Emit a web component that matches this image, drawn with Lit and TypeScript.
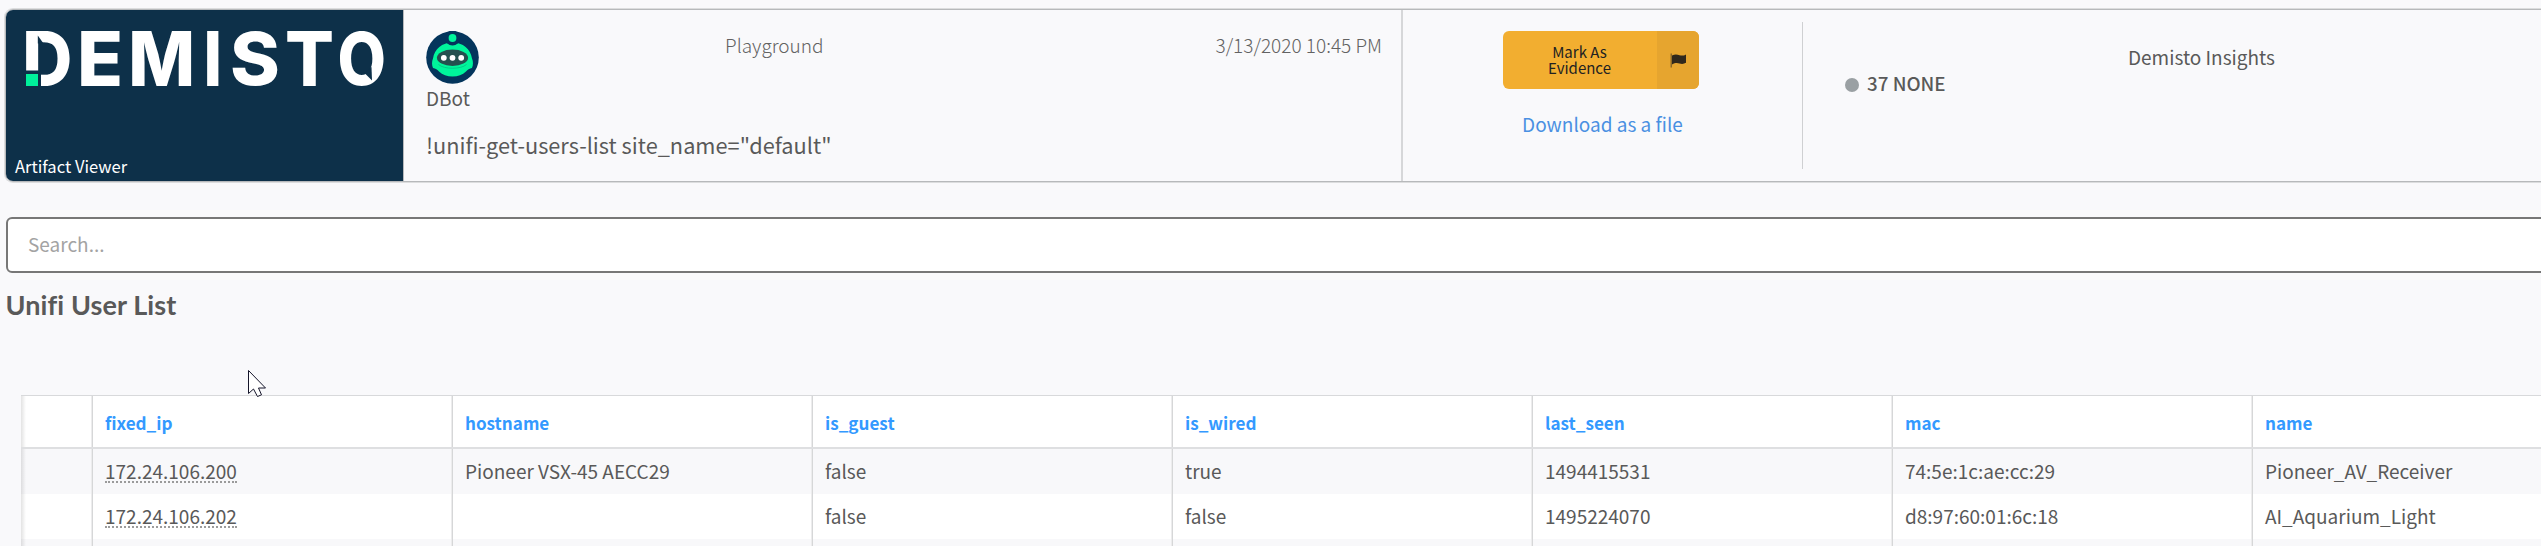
import { LitElement, html, css, svg } from "lit";
import { customElement, property } from "lit/decorators.js";

const COLUMNS = ["fixed_ip", "hostname", "is_guest", "is_wired", "last_seen", "mac", "name"];
const ROWS = [
  ["172.24.106.200", "Pioneer VSX-45 AECC29", "false", "true", "1494415531", "74:5e:1c:ae:cc:29", "Pioneer_AV_Receiver"],
  ["172.24.106.202", "", "false", "false", "1495224070", "d8:97:60:01:6c:18", "AI_Aquarium_Light"],
  ["", "", "", "", "", "", ""],
];

/* Letter, left edge and right edge inside the 358px wide wordmark. */
const WORDMARK: [string, number, number][] = [
  ["D", 0, 44], ["E", 55, 94], ["M", 106, 166], ["I", 181, 193], ["S", 206, 252], ["T", 261, 306], ["O", 314, 358],
];

@customElement("brand-logo")
class BrandLogo extends LitElement {
  static styles = css`
    :host { display: block; width: 358px; height: 55px; }
    svg { display: block; overflow: visible; }
    text { font: 800 75.6px Inter, sans-serif; fill: #fff; }
    .cut { fill: #0d3049; }
    .dot { fill: #00f09b; }
  `;
  render() {
    const ctx = document.createElement("canvas").getContext("2d")!;
    ctx.font = '800 75.6px Inter, sans-serif';
    return html`<svg width="358" height="55" viewBox="0 0 358 55">
      ${WORDMARK.map(([ch, left, right]) => {
        const m = ctx.measureText(ch);
        const ink = m.actualBoundingBoxLeft + m.actualBoundingBoxRight;
        const k = (right - left) / ink;
        const tall = m.actualBoundingBoxAscent + m.actualBoundingBoxDescent;
        const ky = 55 / tall;
        const x = left + m.actualBoundingBoxLeft * k;
        const y = 55 - m.actualBoundingBoxDescent * ky;
        return svg`<text transform="translate(${x} ${y}) scale(${k} ${ky})">${ch}</text>`;
      })}
      <rect class="cut" x="-1" y="39.5" width="16" height="17"></rect>
      <rect class="dot" x="0" y="43" width="12" height="12"></rect>
      <path class="cut" d="M11.8 4.500 17.500 12.500H11.800Z"></path>
      <path class="cut" d="M338.500 42L345.500 36L346 49.500Z"></path>
    </svg>`;
  }
}

@customElement("bot-avatar")
class BotAvatar extends LitElement {
  static styles = css`:host, svg { display: block; }`;
  render() {
    return html`<svg width="53" height="53" viewBox="0 0 53 53">
      <circle cx="26.500" cy="26.500" r="26.300" fill="#04355c"></circle>
      <path fill="#00f59b" d="M26.500 11.500C37 11.500 44.500 18 46 27.500C47.300 30.500 47.300 34 46 37C43.500 37.800 41.500 38.500 40 40.500C36.500 44 32 45.500 26.500 45.500S16.500 44 13 40.500C11.500 38.500 9.500 37.800 7 37C5.700 34 5.700 30.500 7 27.500C8.500 18 16 11.500 26.500 11.500Z"></path>
      <path fill="none" stroke="#00c985" stroke-width="0.900" d="M12.500 33.500C18 38.500 35 38.500 40.500 33.500"></path>
      <circle cx="26.500" cy="7" r="7.600" fill="#04355c"></circle>
      <circle cx="26.500" cy="7" r="3.900" fill="#00f59b"></circle>
      <ellipse cx="26.500" cy="26.800" rx="15.600" ry="8.200" fill="#24504f"></ellipse>
      <circle cx="17.800" cy="26.800" r="2.900" fill="#fff"></circle>
      <circle cx="26.500" cy="26.800" r="2.900" fill="#fff"></circle>
      <circle cx="35.200" cy="26.800" r="2.900" fill="#fff"></circle>
    </svg>`;
  }
}

@customElement("artifact-header")
class ArtifactHeader extends LitElement {
  static styles = css`
    :host {
      display: flex; box-sizing: border-box; width: 2560px; height: 173px;
      border: 1px solid #b7b9bb; border-radius: 8px; box-shadow: 0 0 0 1px #dcddde;
      overflow: hidden; line-height: 24px;
    }
    .brand {
      flex: none; box-sizing: border-box; width: 398px; background: #0d3049; border-right: 1px solid #b7b9bb;
      display: flex; flex-direction: column; justify-content: space-between; padding: 21px 0 3px 20px;
    }
    .viewer { color: #fff; font-size: 16.6px; margin-left: -11px; }
    .command {
      flex: none; box-sizing: border-box; width: 999px; border-right: 2px solid #d6d7d9;
      padding: 21px 19px 0 22px; display: flex; flex-direction: column;
    }
    .top { display: grid; grid-template-columns: 299px 1fr auto; height: 53px; align-items: start; }
    .meta { font-weight: 300; padding-top: 2px; color: #626262; }
    .name { font-weight: 400; line-height: 26px; margin: 1px 0 0 0; }
    .line { font-size: 21.75px; line-height: 30px; margin: 19px 0 0 0; }
    .actions {
      flex: none; width: 399px; padding-top: 21px;
      display: flex; flex-direction: column; align-items: center;
    }
    .evidence {
      display: flex; width: 196px; height: 58px; border-radius: 6px; overflow: hidden;
      background: #f2ae30; color: #222; margin-right: 4px;
      font-size: 15px; line-height: 16px; text-align: center;
    }
    .label { width: 154px; display: flex; flex-direction: column; justify-content: center; padding-bottom: 1px; box-sizing: border-box; }
    .flag { flex: 1; background: #e6a52f; display: flex; align-items: center; justify-content: center; }
    .flag svg { margin-left: 2px; }
    .link { color: #4a90e2; margin-top: 23px; }
    .insights {
      flex: 1; margin: 12px 0; border-left: 1px solid #cfd0d2; display: flex; padding-left: 42px;
    }
    .count { display: flex; align-items: center; gap: 8px; height: 24px; margin-top: 49px; font-weight: 500; font-size: 18.8px; width: 283px; }
    .bullet { width: 14px; height: 14px; border-radius: 50%; background: #9aa0a3; margin-top: 3px; }
    .heading { margin-top: 23px; }
  `;
  render() {
    return html`
      <div class="brand"><brand-logo></brand-logo><div class="viewer">Artifact Viewer</div></div>
      <div class="command">
        <div class="top">
          <bot-avatar></bot-avatar>
          <div class="meta">Playground</div>
          <div class="meta">3/13/2020 10:45 PM</div>
        </div>
        <div class="name">DBot</div>
        <div class="line">!unifi-get-users-list site_name="default"</div>
      </div>
      <div class="actions">
        <div class="evidence">
          <div class="label"><span>Mark As</span><span>Evidence</span></div>
          <div class="flag">
            <svg width="17" height="15" viewBox="0 0 17 15">
              <path fill="#8f6a27" d="M0.500 0.500H2V14.500H0.500Z"></path>
              <path fill="#30281c" d="M2 2.500C5 .8 7.500 1.400 9.500 2.200C12 3 14 2.600 16 1.400V9.800C14 11 12 11.300 9.500 10.500C7 9.700 5 9.800 2 11.500Z"></path>
            </svg>
          </div>
        </div>
        <div class="link">Download as a file</div>
      </div>
      <div class="insights">
        <div class="count"><span class="bullet"></span><span>37 NONE</span></div>
        <div class="heading">Demisto Insights</div>
      </div>`;
  }
}

@customElement("user-table")
class UserTable extends LitElement {
  @property({ attribute: false }) columns: string[] = [];
  @property({ attribute: false }) rows: string[][] = [];
  static styles = css`
    :host { display: block; width: 2592px; border-top: 1px solid #d8d9db; background: #fff; }
    .row { display: grid; grid-template-columns: 72px repeat(7, 360px); height: 45px; }
    .row:nth-child(even) { background: #f8f8fa; }
    .head { height: 53px; box-sizing: border-box; border-bottom: 2px solid #dedfe1; color: #3399ff; font-weight: 700; font-size: 17.1px; }
    .cell { box-sizing: border-box; border-right: 1px solid #d6d7d8; box-shadow: -1px 0 0 #ececed inset; padding: 10px 0 0 12px; line-height: 24px; white-space: nowrap; }
    .head .cell { padding-top: 15px; }
    .gutter { background: linear-gradient(90deg, #0000001c, #0000 5px); }
    .ip { display: inline-block; line-height: 22px; height: 24px; padding-top: 1px; box-sizing: border-box; border-bottom: 2px dotted #9b9b9b; }
  `;
  render() {
    return html`
      <div class="row head"><div class="cell gutter"></div>${this.columns.map(c => html`<div class="cell">${c}</div>`)}</div>
      ${this.rows.map(r => html`<div class="row"><div class="cell gutter"></div>${r.map((v, i) =>
        html`<div class="cell">${i === 0 && v ? html`<span class="ip">${v}</span>` : v}</div>`)}</div>`)}`;
  }
}

@customElement("app-root")
class AppRoot extends LitElement {
  static styles = css`
    :host {
      display: block; position: relative; box-sizing: border-box; height: 546px; overflow: hidden;
      background: #f9f9fb; color: #595959; padding: 9px 0 0 5px;
      font: 19px/24px "Noto Sans CJK SC", "Noto Sans", sans-serif;
    }
    .search {
      box-sizing: border-box; width: 2560px; height: 56px; margin: 35px 0 0 1px;
      border: 2px solid #777; border-radius: 6px; background: #fff;
      padding: 13px 20px; color: #a3a3a3;
    }
    .title { font: 700 27px/34px Lato, sans-serif; font-variant-ligatures: none; letter-spacing: 0.1px; margin: 15px 0 0 0.500px; height: 34px; }
    user-table { margin: 73px 0 0 16px; }
    .pointer { position: absolute; left: 248px; top: 370px; }
  `;
  render() {
    return html`
      <artifact-header></artifact-header>
      <div class="search">Search...</div>
      <div class="title">Unifi User List</div>
      <user-table .columns=${COLUMNS} .rows=${ROWS}></user-table>
      <svg class="pointer" width="19" height="28" viewBox="0 0 19 28">
        <path fill="#fff" stroke="#15152a" stroke-width="1" d="M.5.500V23.500L5.500 19L9.500 26.500L13.500 24.800L10.500 18H17.500Z"></path>
      </svg>`;
  }
}
